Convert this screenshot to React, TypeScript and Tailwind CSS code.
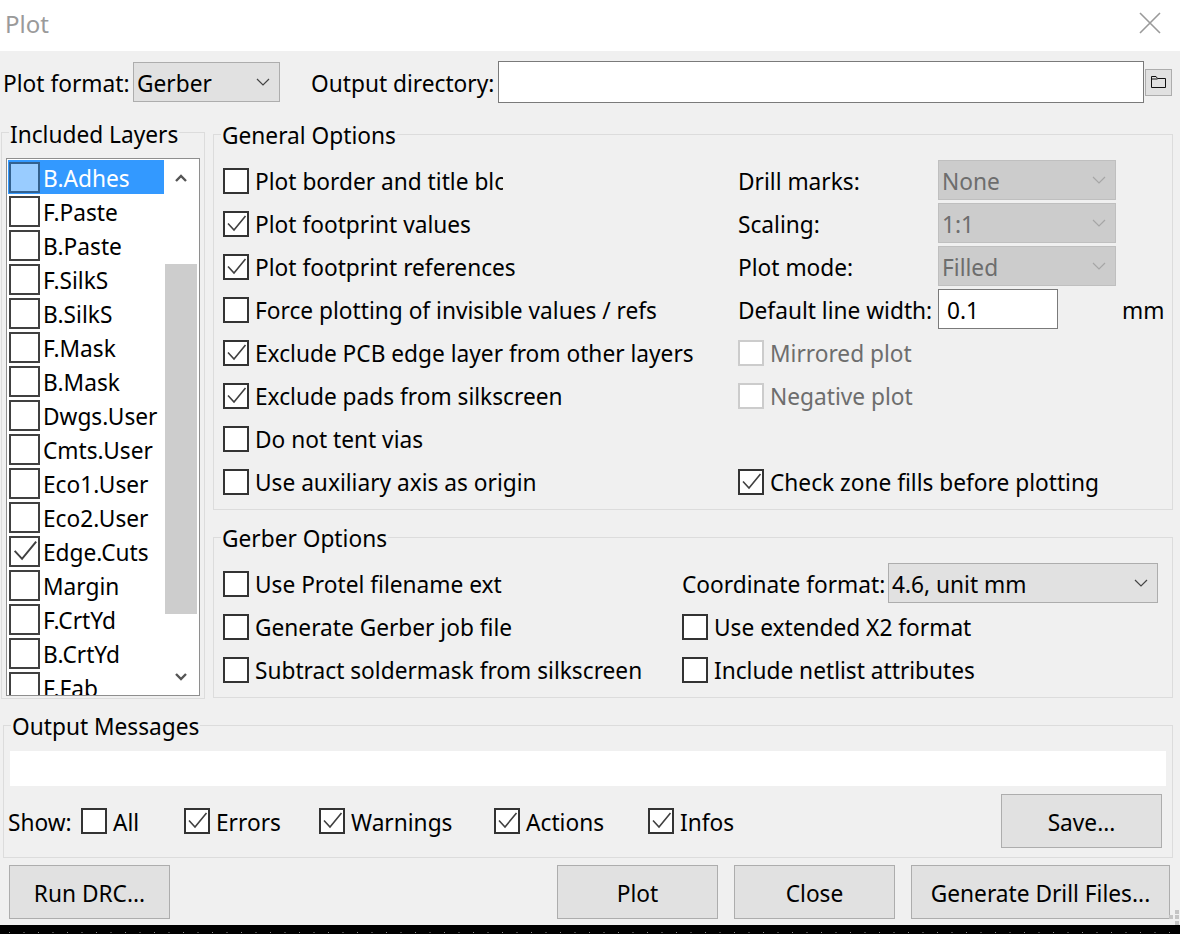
import React from "react";

const layers = ["B.Adhes","F.Paste","B.Paste","F.SilkS","B.SilkS","F.Mask","B.Mask","Dwgs.User","Cmts.User","Eco1.User","Eco2.User","Edge.Cuts","Margin","F.CrtYd","B.CrtYd","F.Fab"];

function Tick({ size = 22 }: { size?: number }) {
  return (
    <svg width={size} height={size} viewBox="0 0 22 22" fill="none" className="block shrink-0">
      <path d="M3 10.5 L9 17 L20.5 3" stroke="#404040" strokeWidth="1.6" />
    </svg>
  );
}

function Check({ label, checked = false, disabled = false, clip }: { label: string; checked?: boolean; disabled?: boolean; clip?: boolean }) {
  return (
    <div className="flex items-center h-[43px] shrink-0">
      <div className={"w-[26px] h-[26px] shrink-0 bg-white border-2 flex items-center justify-center " + (disabled ? "border-[#cccccc]" : "border-[#333333]")}>
        {checked && <Tick />}
      </div>
      <span className={"ml-[6px] mt-[3px] whitespace-nowrap " + (disabled ? "text-[#6d6d6d] " : "text-black ") + (clip ? "w-[248px] overflow-hidden" : "")}>{label}</span>
    </div>
  );
}

function Chevron({ color = "#444444" }: { color?: string }) {
  return (
    <svg width="14" height="8" viewBox="0 0 14 8" fill="none" className="block">
      <path d="M1 1 L7 7 L13 1" stroke={color} strokeWidth="1.2" />
    </svg>
  );
}

function Select({ value, className, disabled = false }: { value: string; className: string; disabled?: boolean }) {
  return (
    <div className={"flex items-center justify-between border pl-[3px] pr-[9px] " + (disabled ? "bg-[#cccccc] border-[#bfbfbf] text-[#6d6d6d] " : "bg-[#e1e1e1] border-[#adadad] text-black ") + className}>
      <span className="mt-[3px]">{value}</span>
      <Chevron color={disabled ? "#a6a6a6" : "#444444"} />
    </div>
  );
}

function Group({ title, className, legendClass, children }: { title: string; className: string; legendClass: string; children: React.ReactNode }) {
  return (
    <div className={"relative border border-[#dcdcdc] " + className}>
      <span className={"absolute bg-[#f0f0f0] px-[1px] leading-[32px] h-[32px] whitespace-nowrap text-black " + legendClass}>{title}</span>
      {children}
    </div>
  );
}

function Btn({ label, className }: { label: string; className: string }) {
  return (
    <div className={"h-[54px] flex items-center justify-center bg-[#e1e1e1] border-[1.5px] border-[#adadad] text-black " + className}>
      <span className="mt-[4px]">{label}</span>
    </div>
  );
}

function Row({ label, children }: { label: string; children: React.ReactNode }) {
  return (
    <div className="flex items-center h-[43px]">
      <span className="w-[200px] mt-[3px] shrink-0 whitespace-nowrap">{label}</span>
      {children}
    </div>
  );
}

export default function App() {
  return (
    <div className="w-[1180px] h-[934px] overflow-hidden flex flex-col bg-[#f0f0f0] text-[22.7px] leading-[32px] text-black" style={{ fontFamily: '"Noto Sans", sans-serif' }}>
      <div className="h-[51px] shrink-0 bg-white flex items-center justify-between pl-[5px] pr-[19px]">
        <span className="text-[#9a9a9a] text-[24px] mt-[-4px]">Plot</span>
        <svg width="22" height="22" viewBox="0 0 22 22" fill="none" className="mt-[-6px]"><path d="M1 1 L21 21 M21 1 L1 21" stroke="#9a9a9a" strokeWidth="1.6" /></svg>
      </div>

      <div className="flex items-center h-[42px] mt-[10px] shrink-0 pl-[3px]">
        <span className="w-[130px] mt-[3px] shrink-0 whitespace-nowrap">Plot format:</span>
        <Select value="Gerber" className="w-[147px] h-[40px]" />
        <span className="ml-[31px] mt-[3px] w-[187px] shrink-0 whitespace-nowrap">Output directory:</span>
        <div className="w-[646px] h-[42px] bg-white border-[1.5px] border-[#7a7a7a]" />
        <div className="ml-[1px] w-[27px] h-[27px] bg-[#e1e1e1] border border-[#adadad] flex items-center justify-center">
          <svg width="15" height="12" viewBox="0 0 15 12" fill="none"><path d="M0.5 11.5 V0.5 H5 L6.5 2.5 H14.5 V11.5 Z M0.5 3 H6.5" stroke="#111" strokeWidth="1" /></svg>
        </div>
      </div>

      <div className="flex mt-[29px] pl-[1px] shrink-0">
        <Group title="Included Layers" className="w-[204px] h-[567px] pl-[4px] pt-[25px]" legendClass="left-[7px] top-[-14px]">
          <div className="w-[194px] h-[538px] bg-white border border-[#8e8e8e] flex overflow-hidden pl-[1px] pt-[1px]">
            <div className="w-[156px] shrink-0 flex flex-col">
              {layers.map((l, i) => (
                <div key={l} className={"h-[34px] shrink-0 flex items-center pl-[1px] " + (i === 0 ? "bg-[#3399ff] text-white" : "text-black")}>
                  <div className={"w-[31px] h-[31px] shrink-0 border-2 flex items-center justify-center " + (i === 0 ? "bg-[#99ccff] border-[#33618f]" : "bg-white border-[#404040]")}>
                    {l === "Edge.Cuts" && <Tick size={27} />}
                  </div>
                  <span className="ml-[3px] mt-[4px] whitespace-nowrap">{l}</span>
                </div>
              ))}
            </div>
            <div className="ml-[1px] w-[32px] flex flex-col items-center">
              <div className="h-[104px] shrink-0 w-full flex justify-center pt-[14px]">
                <svg width="12" height="8" viewBox="0 0 12 8" fill="none"><path d="M1 7 L6 2 L11 7" stroke="#555" strokeWidth="2.4" /></svg>
              </div>
              <div className="h-[350px] shrink-0 w-full bg-[#cdcdcd]" />
              <div className="flex-1 flex items-start justify-center pt-[59px]">
                <svg width="12" height="8" viewBox="0 0 12 8" fill="none"><path d="M1 1 L6 6 L11 1" stroke="#555" strokeWidth="2.4" /></svg>
              </div>
            </div>
          </div>
        </Group>

        <div className="ml-[8px] w-[960px] flex flex-col">
          <Group title="General Options" className="h-[376px] mt-[2px] pl-[9px] pt-[24px] flex" legendClass="left-[7px] top-[-15px]">
            <div className="w-[515px] flex flex-col shrink-0">
              <Check label="Plot border and title block" clip />
              <Check label="Plot footprint values" checked />
              <Check label="Plot footprint references" checked />
              <Check label="Force plotting of invisible values / refs" />
              <Check label="Exclude PCB edge layer from other layers" checked />
              <Check label="Exclude pads from silkscreen" checked />
              <Check label="Do not tent vias" />
              <Check label="Use auxiliary axis as origin" />
            </div>
            <div className="flex flex-col flex-1">
              <Row label="Drill marks:"><Select disabled value="None" className="w-[178px] h-[40px] mt-[-1px]" /></Row>
              <Row label="Scaling:"><Select disabled value="1:1" className="w-[178px] h-[40px] mt-[-1px]" /></Row>
              <Row label="Plot mode:"><Select disabled value="Filled" className="w-[178px] h-[40px] mt-[-1px]" /></Row>
              <Row label="Default line width:">
                <div className="w-[120px] h-[40px] mt-[-1px] bg-white border-[1.5px] border-[#7a7a7a] pl-[8px] flex items-center"><span className="mt-[3px]">0.1</span></div>
                <span className="ml-[64px] mt-[3px]">mm</span>
              </Row>
              <Check label="Mirrored plot" disabled />
              <Check label="Negative plot" disabled />
              <div className="h-[43px] shrink-0" />
              <Check label="Check zone fills before plotting" checked />
            </div>
          </Group>

          <Group title="Gerber Options" className="h-[161px] mt-[27px] pl-[9px] pt-[24px] flex" legendClass="left-[7px] top-[-15px]">
            <div className="w-[459px] flex flex-col shrink-0">
              <Check label="Use Protel filename ext" />
              <Check label="Generate Gerber job file" />
              <Check label="Subtract soldermask from silkscreen" />
            </div>
            <div className="flex flex-col flex-1">
              <div className="flex items-center h-[43px]">
                <span className="w-[206px] mt-[3px] shrink-0 whitespace-nowrap">Coordinate format:</span>
                <Select value="4.6, unit mm" className="w-[270px] h-[40px] mt-[-1px]" />
              </div>
              <Check label="Use extended X2 format" />
              <Check label="Include netlist attributes" />
            </div>
          </Group>
        </div>
      </div>

      <div className="mt-[26px] ml-[3px] w-[1170px] shrink-0">
        <Group title="Output Messages" className="h-[133px] px-[6px] pt-[25px]" legendClass="left-[7px] top-[-15px]">
          <div className="h-[35px] bg-white" />
          <div className="flex items-center h-[54px] mt-[8px] relative">
            <span className="ml-[-2px] mt-[3px] w-[73px] shrink-0">Show:</span>
            <div className="w-[103px] shrink-0"><Check label="All" /></div>
            <div className="w-[135px] shrink-0"><Check label="Errors" checked /></div>
            <div className="w-[175px] shrink-0"><Check label="Warnings" checked /></div>
            <div className="w-[154px] shrink-0"><Check label="Actions" checked /></div>
            <div className="w-[353px] shrink-0"><Check label="Infos" checked /></div>
            <Btn label="Save..." className="w-[161px] shrink-0" />
          </div>
        </Group>
      </div>

      <div className="flex items-center mt-[7px] h-[54px] shrink-0 pl-[9px]">
        <Btn label="Run DRC..." className="w-[161px]" />
        <Btn label="Plot" className="w-[161px] ml-[387px]" />
        <Btn label="Close" className="w-[161px] ml-[16px]" />
        <Btn label="Generate Drill Files..." className="w-[259px] ml-[16px]" />
      </div>

      <div className="h-[6px] shrink-0 relative">
        <svg width="16" height="16" viewBox="0 0 16 16" className="absolute right-[0px] bottom-[-1px]">
          <g fill="#c4c4c4"><rect x="11" y="0" width="4" height="4" /><rect x="11" y="5" width="4" height="4" /><rect x="11" y="11" width="4" height="4" /><rect x="5" y="5" width="4" height="4" /></g>
        </svg>
      </div>
      <div className="flex-1 bg-black">
        <svg width="1180" height="9" className="block">
          <line x1="0" y1="7.5" x2="1180" y2="7.5" stroke="#8a8a8a" strokeWidth="1" strokeDasharray="1 13.5" strokeDashoffset="-9" />
        </svg>
      </div>
    </div>
  );
}
